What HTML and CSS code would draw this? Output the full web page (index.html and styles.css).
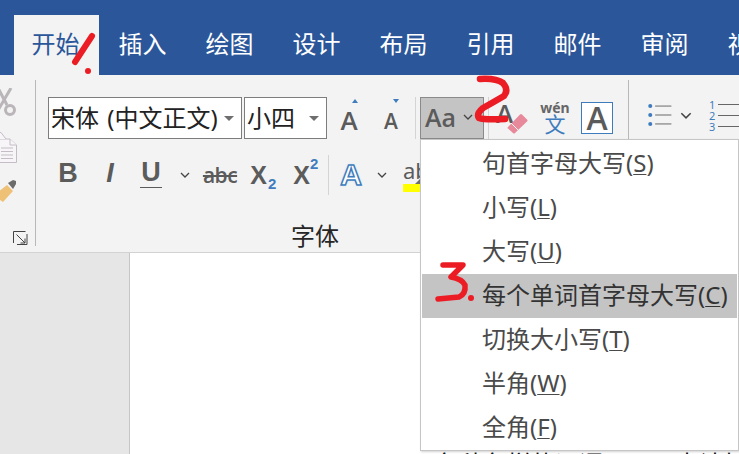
FILE: index.html
```html
<!DOCTYPE html>
<html lang="zh">
<head>
<meta charset="utf-8">
<title>字体</title>
<link rel="stylesheet" href="styles.css">
</head>
<body>
<div class="app">
  <nav class="tabs">
    <div class="tab active">开始</div>
    <div class="tab">插入</div>
    <div class="tab">绘图</div>
    <div class="tab">设计</div>
    <div class="tab">布局</div>
    <div class="tab">引用</div>
    <div class="tab">邮件</div>
    <div class="tab">审阅</div>
    <div class="tab">视图</div>
  </nav>

  <section class="ribbon">
    <div class="group clip">
      <svg class="clip-icons" width="35" height="122" viewBox="0 0 35 122">
        <g fill="none" stroke="#b9b5b9" stroke-width="3">
          <path d="M11 0 L-3 24"/><path d="M-2 0 L7 17"/>
          <circle cx="10" cy="22" r="4.500"/>
        </g>
        <g fill="#f7f5f7" stroke="#c4bdc6" stroke-width="1">
          <path d="M-2 51H10L16.500 57V74.500H-2Z"/>
          <path d="M-2 51V44.500H1L6 51" />
          <path d="M10 51V57H16.500"/>
        </g>
        <path d="M1 60H13M1 63.500H13M1 67H13M1 70.500H13" stroke="#c4bdc6" fill="none"/>
        <path d="M-3 105 L7 97 L13 103 L3 114 L-3 110Z" fill="#eec176"/>
        <path d="M8 95 L13 92 L16 93 L16 96 L13 101Z" fill="#6b6b6b"/>
      </svg>
      <svg class="launcher" width="15" height="15" viewBox="0 0 15 15">
        <path d="M.5 12V.5H12.500M14 3V13.500H4M3.500 3.500L12 12M12 7.500V12H7.500" fill="none" stroke="#444" stroke-width="1"/>
      </svg>
    </div>

    <div class="group font">
      <div class="row row-one">
        <div class="select font-name"><span>宋体 (中文正文)</span><i class="tri"></i></div>
        <div class="select font-size"><span>小四</span><i class="tri"></i></div>
        <div class="tool grow"><i class="up"></i><b class="glyph big">A</b></div>
        <div class="tool shrink"><i class="down"></i><b class="glyph small">A</b></div>
        <div class="sep"></div>
        <div class="case-btn"><span class="aa">Aa</span><svg class="chev" width="10" height="6" viewBox="0 0 10 6"><path d="M1 1L5 5L9 1"/></svg></div>
        <div class="sep"></div>
        <div class="tool clear">
          <b class="glyph clear-a">A</b>
          <svg class="eraser" width="24" height="24" viewBox="0 0 24 24"><path d="M3 16L15 3.500Q16 2.500 17 3.500L22 8.500Q23 9.500 22 10.500L10 22Q9 23 8 22L3 17.500Q2 17 3 16Z" fill="#e8889b"/><path d="M6 12L13 19" stroke="#f3f3f3" stroke-width="1"/></svg>
        </div>
        <div class="tool wen"><span class="wen-top">wén</span><span class="wen-zh">文</span></div>
        <div class="boxed"><b class="glyph">A</b></div>
      </div>
      <div class="row row-two">
        <div class="tool c40"><b class="glyph b">B</b></div>
        <div class="tool c44"><b class="glyph i">I</b></div>
        <div class="tool c38"><b class="glyph u">U</b></div>
        <div class="tool c30"><svg class="chev" width="10" height="6" viewBox="0 0 10 6"><path d="M1 1L5 5L9 1"/></svg></div>
        <div class="tool c40"><span class="abc">abc</span></div>
        <div class="tool c44"><b class="glyph x">X</b><b class="idx sub">2</b></div>
        <div class="tool c42"><b class="glyph x">X</b><b class="idx sup">2</b></div>
        <div class="sep short"></div>
        <div class="tool c42"><b class="outline">A</b></div>
        <div class="tool c20"><svg class="chev" width="10" height="6" viewBox="0 0 10 6"><path d="M1 1L5 5L9 1"/></svg></div>
        <div class="tool hl"><span class="ab">ab</span><i class="pen"></i><i class="yellow"></i></div>
      </div>
      <div class="label">字体</div>
    </div>

    <div class="group para">
      <div class="lists">
        <svg width="48" height="30" viewBox="0 0 48 30">
          <g fill="#3f7cbd"><circle cx="4" cy="4" r="2.500"/><circle cx="4" cy="15" r="2.500"/><circle cx="4" cy="26" r="2.500"/></g>
          <path d="M10 4H30M10 15H30M10 26H30" stroke="#666" stroke-width="1.200" fill="none"/>
        </svg>
        <svg class="chev list-chev" width="12" height="7" viewBox="0 0 10 6"><path d="M1 1L5 5L9 1"/></svg>
        <div class="numbers"><span>1</span><span>2</span><span>3</span></div>
      </div>
    </div>
  </section>

  <main class="workspace">
    <div class="margin"></div>
    <div class="page"><p class="doc-line">各种各样的词语，日，大计如日中天</p></div>
  </main>

  <div class="menu">
    <div class="item">句首字母大写(<u>S</u>)</div>
    <div class="item">小写(<u>L</u>)</div>
    <div class="item">大写(<u>U</u>)</div>
    <div class="item on">每个单词首字母大写(<u>C</u>)</div>
    <div class="item">切换大小写(<u>T</u>)</div>
    <div class="item">半角(<u>W</u>)</div>
    <div class="item">全角(<u>F</u>)</div>
  </div>

  <svg class="marks" width="739" height="454" viewBox="0 0 739 454">
    <g fill="none" stroke="#ec1c24" stroke-linecap="round" stroke-linejoin="round">
      <path d="M92 36L75 62" stroke-width="6"/>
      <path d="M480 79Q496 78 503 83Q509 90 504 96Q492 103 483 108Q476 114 479 118Q484 120 505 119" stroke-width="6.500"/>
      <path d="M443 265L463 265L451 277Q462 279 465 285Q466 294 459 297L438 299" stroke-width="5.500"/>
    </g>
    <g fill="#ec1c24"><circle cx="88" cy="71" r="3"/><circle cx="471" cy="298" r="3"/></g>
  </svg>
</div>
</body>
</html>
```
FILE: styles.css
```css
* { box-sizing: border-box; }
html, body { margin: 0; padding: 0; }
body { font-family: "Noto Sans", "Noto Sans CJK SC", sans-serif; }
.app {
  position: relative;
  width: 739px;
  height: 454px;
  overflow: hidden;
  display: flex;
  flex-direction: column;
  background: #fff;
}

/* tabs */
.tabs {
  flex: none;
  height: 75px;
  padding-left: 14px;
  display: flex;
  align-items: flex-end;
  gap: 2px;
  background: #2b579a;
  overflow: hidden;
}
.tab {
  flex: none;
  width: 85px;
  height: 60px;
  padding: 11px 2px 0 0;
  text-align: center;
  font-size: 24px;
  line-height: 36px;
  color: #fff;
  white-space: nowrap;
}
.tab.active { background: #f3f3f3; color: #2b579a; }

/* ribbon */
.ribbon {
  flex: none;
  height: 178px;
  padding-top: 5px;
  display: flex;
  background: #f3f3f3;
  border-bottom: 1px solid #d2d2d2;
}
.group { height: 166px; flex: none; }
.clip {
  position: relative;
  width: 36px;
  border-right: 1px solid #b8b8b8;
  overflow: hidden;
}
.clip-icons { display: block; margin-top: 8px; }
.launcher { display: block; margin: 21px 0 0 13px; }

.font {
  width: 593px;
  padding-left: 12px;
  border-right: 1px solid #b8b8b8;
  display: flex;
  flex-direction: column;
}
.row { display: flex; align-items: center; flex: none; }
.row-one { height: 42px; margin-top: 17px; }
.row-two { height: 40px; margin-top: 16px; }
.label {
  margin-top: auto;
  margin-bottom: -5px;
  padding-right: 46px;
  text-align: center;
  font-size: 24px;
  line-height: 30px;
  color: #262626;
}

.select {
  flex: none;
  height: 42px;
  background: #fff;
  border: 1px solid #7d7d7d;
  display: flex;
  align-items: center;
  justify-content: space-between;
  padding: 0 7px 0 2px;
  font-size: 24px;
  line-height: 36px;
  color: #222;
  white-space: nowrap;
  word-spacing: 2px;
}
.font-name { width: 194px; margin-right: 2px; }
.font-size { width: 83px; }
.tri {
  width: 0;
  height: 0;
  border-left: 5px solid transparent;
  border-right: 5px solid transparent;
  border-top: 5px solid #6e6e6e;
}

.tool {
  position: relative;
  flex: none;
  height: 40px;
  display: flex;
  align-items: center;
  justify-content: center;
}
.glyph {
  font-family: "Open Sans", sans-serif;
  font-weight: 600;
  color: #5b5b5b;
  line-height: 1;
}
.grow { width: 44px; }
.shrink { width: 40px; }
.big { font-size: 26px; margin-top: 4px; }
.small { font-size: 21px; margin-top: 6px; }
.up, .down {
  position: absolute;
  width: 0;
  height: 0;
  border-left: 3.500px solid transparent;
  border-right: 3.500px solid transparent;
}
.up { top: 1px; left: 25px; border-bottom: 4px solid #3f7cbd; }
.down { top: 1px; left: 22px; border-top: 4px solid #3f7cbd; }

.sep { flex: none; width: 1px; height: 42px; margin: 0 4px; background: #d4d4d4; }
.sep.short { height: 40px; margin: 0 1px 0 2px; }

.case-btn {
  flex: none;
  width: 64px;
  height: 42px;
  background: #c4c4c4;
  border: 1px solid #8a8a8a;
  display: flex;
  align-items: center;
  padding: 0 0 2px 4px;
  gap: 7px;
}
.aa { font-size: 25px; font-weight: 600; color: #5b5b5b; font-family: "Open Sans", sans-serif; }
.chev { flex: none; fill: none; stroke: #444; stroke-width: 1.300; }

.clear { width: 38px; height: 42px; }
.clear-a { position: absolute; left: 3px; top: 3px; font-size: 26px; }
.eraser { position: absolute; left: 12px; top: 14px; }
.wen { width: 48px; height: 42px; flex-direction: column; line-height: 1; }
.wen-top { font-size: 14px; font-weight: 700; color: #666; margin-top: -1px; }
.wen-zh { font-size: 21px; color: #3f7cbd; margin-top: -1px; }
.boxed {
  flex: none;
  width: 32px;
  height: 32px;
  margin-left: 2px;
  background: #fff;
  border: 1px solid #3f7cbd;
  display: flex;
  align-items: center;
  justify-content: center;
}
.boxed .glyph { font-size: 32px; }

.c20 { width: 20px; }
.c30 { width: 30px; }
.c38 { width: 38px; }
.c40 { width: 40px; }
.c42 { width: 42px; }
.c44 { width: 44px; }
.b, .u, .i {
  font-size: 27px;
  font-family: "Liberation Sans", sans-serif;
  font-weight: 700;
  margin-top: -3px;
}
.i { font-style: italic; }
.u { border-bottom: 1.500px solid #5b5b5b; padding: 0 1px 1px; }
.abc {
  font-family: "Open Sans", sans-serif;
  font-size: 21px;
  color: #5b5b5b;
  text-decoration: line-through;
  font-weight: 600;
  letter-spacing: -.5px;
}
.x { font-size: 25px; margin-right: 7px; font-family: "Liberation Sans", sans-serif; font-weight: 700; }
.idx {
  position: absolute;
  font-family: "Liberation Sans", sans-serif;
  font-size: 15px;
  color: #3f7cbd;
  line-height: 1;
}
.sub { left: 28px; bottom: 4px; }
.sup { left: 26px; top: 1px; }
.outline {
  font-family: "Liberation Sans", sans-serif;
  font-size: 30px;
  color: #fff;
  -webkit-text-stroke: 1.500px #3f7cbd;
  text-shadow: 0 0 3px #bcd6ee;
}
.hl { width: 28px; height: 44px; overflow: hidden; margin-left: 11px; display: block; }
.ab { display: block; font-size: 22px; line-height: 24px; color: #5b5b5b; margin-top: 5px; }
.pen {
  position: absolute;
  left: 10px;
  top: 27px;
  width: 14px;
  height: 5px;
  background: #6e6e6e;
  transform: rotate(-45deg);
}
.yellow { position: absolute; left: 0; bottom: 5px; width: 17px; height: 8px; background: #ffff00; }

.para { flex: 1; min-width: 0; overflow: hidden; }
.lists { display: flex; align-items: center; height: 30px; margin-top: 20px; padding-left: 18px; }
.list-chev { margin-left: -6px; }
.numbers {
  display: flex;
  flex-direction: column;
  margin-left: 17px;
  font-size: 11px;
  line-height: 11px;
  color: #3f7cbd;
}
.numbers span {
  display: flex;
  align-items: center;
  gap: 3px;
  width: 30px;
}
.numbers span::after { content: ""; flex: 1; height: 1px; background: #666; }

/* document */
.workspace { flex: 1; min-height: 0; display: flex; overflow: hidden; }
.margin { flex: none; width: 130px; background: #e6e6e6; border-right: 1px solid #c6c6c6; }
.page { flex: 1; background: #fff; padding: 196px 0 0 305px; overflow: hidden; }
.doc-line { margin: 0; font-size: 24px; line-height: 30px; color: #111; white-space: nowrap; }

/* dropdown */
.menu {
  position: absolute;
  left: 420px;
  top: 139px;
  width: 319px;
  height: 312px;
  padding: 2px 1px 0;
  background: #fff;
  border: 1px solid #c6c6c6;
  box-shadow: 1px 1px 2px rgba(0, 0, 0, .18);
}
.item {
  height: 44px;
  padding-left: 60px;
  font-size: 24px;
  line-height: 42px;
  color: #4a4a4a;
  white-space: nowrap;
}
.item.on { background: #c4c4c4; color: #333; }
.item u { text-underline-offset: 2px; text-decoration-thickness: 1px; }

.marks { position: absolute; left: 0; top: 0; pointer-events: none; }
```
